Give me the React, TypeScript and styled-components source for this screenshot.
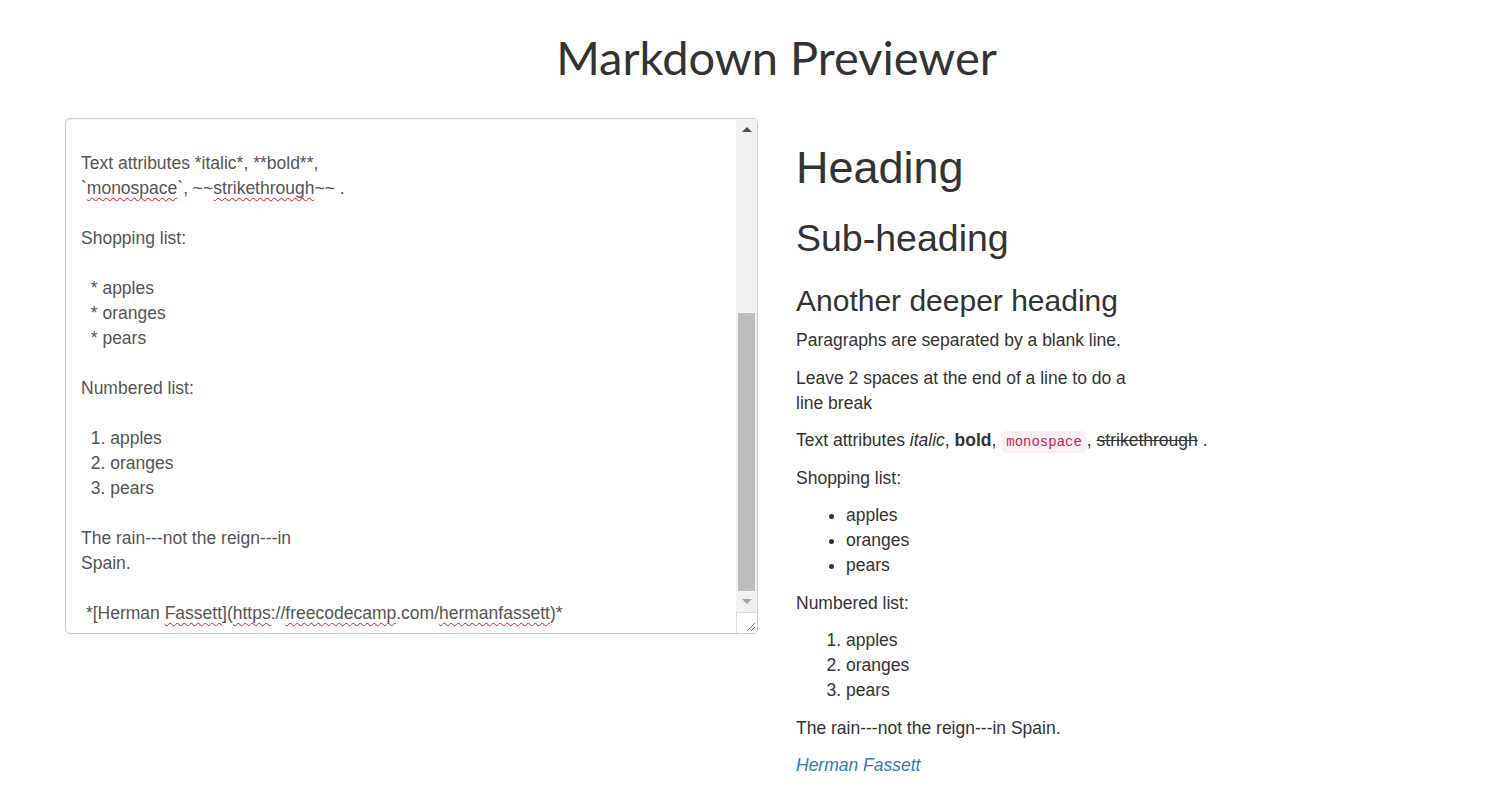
import { createGlobalStyle, styled } from "styled-components";

const GlobalStyle = createGlobalStyle`
  * {
    box-sizing: border-box;
  }
  body {
    margin: 0;
    background: #fff;
    color: #333;
    font-family: "Liberation Sans", Arial, sans-serif;
    font-size: 17.5px;
    line-height: 25px;
  }
`;

const Title = styled.h1`
  margin: 0;
  padding: 26px 0 0 49px;
  height: 118px;
  text-align: center;
  font-family: Lato, "Open Sans", sans-serif;
  font-weight: 400;
  font-size: 47px;
  line-height: 62px;
  color: #333;
`;

const Main = styled.main`
  display: grid;
  grid-template-columns: 693px 1fr;
  column-gap: 38px;
  align-items: start;
  padding-left: 65px;
`;

// the editor box (looks like a bootstrap form-control textarea)
const Editor = styled.div`
  display: flex;
  height: 516px;
  border: 1px solid #ccc;
  border-radius: 5px;
  box-shadow: inset 0 1px 1px rgba(0, 0, 0, 0.075);
  overflow: hidden;
`;

const TextPane = styled.div`
  flex: 1;
  display: flex;
  flex-direction: column;
  justify-content: flex-end;
  overflow: hidden;
  padding: 7.5px 15px;
  color: #555;
`;

const EditorText = styled.div`
  white-space: pre-wrap;
`;

// spell checker squiggle
const Typo = styled.span`
  text-decoration: underline wavy #e81123;
  text-decoration-thickness: 1px;
  text-decoration-skip-ink: none;
  text-underline-offset: 3px;
`;

const ScrollBar = styled.div`
  width: 21px;
  display: flex;
  flex-direction: column;
  background: #f1f1f1;
`;

const ScrollButton = styled.div`
  height: 21px;
  display: flex;
  align-items: center;
  justify-content: center;
`;

const Arrow = styled.div<{ $down?: boolean; $disabled?: boolean }>`
  width: 0;
  height: 0;
  border-left: 5px solid transparent;
  border-right: 5px solid transparent;
  ${(p) =>
    p.$down
      ? `border-top: 5px solid ${p.$disabled ? "#a3a3a3" : "#505050"};`
      : `border-bottom: 5px solid ${p.$disabled ? "#a3a3a3" : "#505050"};`}
`;

const Track = styled.div`
  flex: 1;
  display: flex;
  flex-direction: column;
  justify-content: flex-end;
  padding: 0 2px;
`;

const Thumb = styled.div`
  height: 278px;
  background: #bdbdbd;
`;

const Resizer = styled.div`
  height: 21px;
  background: #fff;
  border-top: 1px solid #dcdcdc;
  border-left: 1px solid #dcdcdc;
  display: flex;
  align-items: flex-end;
  justify-content: flex-end;
`;

const Preview = styled.div`
  color: #333;
`;

const H1 = styled.h1`
  margin: 25px 0 12.5px;
  font-size: 45px;
  font-weight: 500;
  line-height: 1.1;
`;

const H2 = styled.h2`
  margin: 25px 0 12.5px;
  font-size: 37.5px;
  font-weight: 500;
  line-height: 1.1;
`;

const H3 = styled.h3`
  margin: 25px 0 11.5px;
  font-size: 30px;
  font-weight: 500;
  line-height: 1.1;
`;

const P = styled.p`
  margin: 0 0 12.5px;
`;

const List = styled.ul`
  margin: 0 0 12.5px;
  padding-left: 50px;
`;

const NumList = styled.ol`
  margin: 0 0 12.5px;
  padding-left: 50px;
`;

const Code = styled.code`
  padding: 3px 5px;
  font-family: "Liberation Mono", monospace;
  font-size: 14px;
  line-height: 1;
  color: #c7254e;
  background: #f9f2f4;
  border-radius: 5px;
`;

const Link = styled.a`
  color: #337ab7;
  text-decoration: none;
`;

const markdownTop = `# Heading

## Sub-heading

### Another deeper heading

Paragraphs are separated by a blank line.

Leave 2 spaces at the end of a line to do a  
line break

Text attributes *italic*, **bold**,
\``;

const markdownMiddle = `~~ .

Shopping list:

  * apples
  * oranges
  * pears

Numbered list:

  1. apples
  2. oranges
  3. pears

The rain---not the reign---in
Spain.

 *[Herman `;

export default function App() {
  return (
    <>
      <GlobalStyle />
      <Title>Markdown Previewer</Title>
      <Main>
        <Editor>
          <TextPane>
            <EditorText>
              {markdownTop}
              <Typo>monospace</Typo>
              {"`, ~~"}
              <Typo>strikethrough</Typo>
              {markdownMiddle}
              <Typo>Fassett</Typo>
              {"]("}
              <Typo>https</Typo>
              {"://"}
              <Typo>freecodecamp</Typo>
              {".com/"}
              <Typo>hermanfassett</Typo>
              {")*"}
            </EditorText>
          </TextPane>
          <ScrollBar>
            <ScrollButton>
              <Arrow />
            </ScrollButton>
            <Track>
              <Thumb />
            </Track>
            <ScrollButton>
              <Arrow $down $disabled />
            </ScrollButton>
            <Resizer>
              <svg width="14" height="14" viewBox="0 0 14 14">
                <line x1="12" y1="4" x2="4" y2="12" stroke="#777" strokeWidth="1" />
                <line x1="12" y1="8" x2="8" y2="12" stroke="#777" strokeWidth="1" />
              </svg>
            </Resizer>
          </ScrollBar>
        </Editor>

        <Preview>
          <H1>Heading</H1>
          <H2>Sub-heading</H2>
          <H3>Another deeper heading</H3>
          <P>Paragraphs are separated by a blank line.</P>
          <P>
            Leave 2 spaces at the end of a line to do a
            <br />
            line break
          </P>
          <P>
            Text attributes <em>italic</em>, <strong>bold</strong>, <Code>monospace</Code>,{" "}
            <del>strikethrough</del> .
          </P>
          <P>Shopping list:</P>
          <List>
            <li>apples</li>
            <li>oranges</li>
            <li>pears</li>
          </List>
          <P>Numbered list:</P>
          <NumList>
            <li>apples</li>
            <li>oranges</li>
            <li>pears</li>
          </NumList>
          <P>The rain---not the reign---in Spain.</P>
          <P>
            <em>
              <Link href="https://freecodecamp.com/hermanfassett">Herman Fassett</Link>
            </em>
          </P>
        </Preview>
      </Main>
    </>
  );
}
